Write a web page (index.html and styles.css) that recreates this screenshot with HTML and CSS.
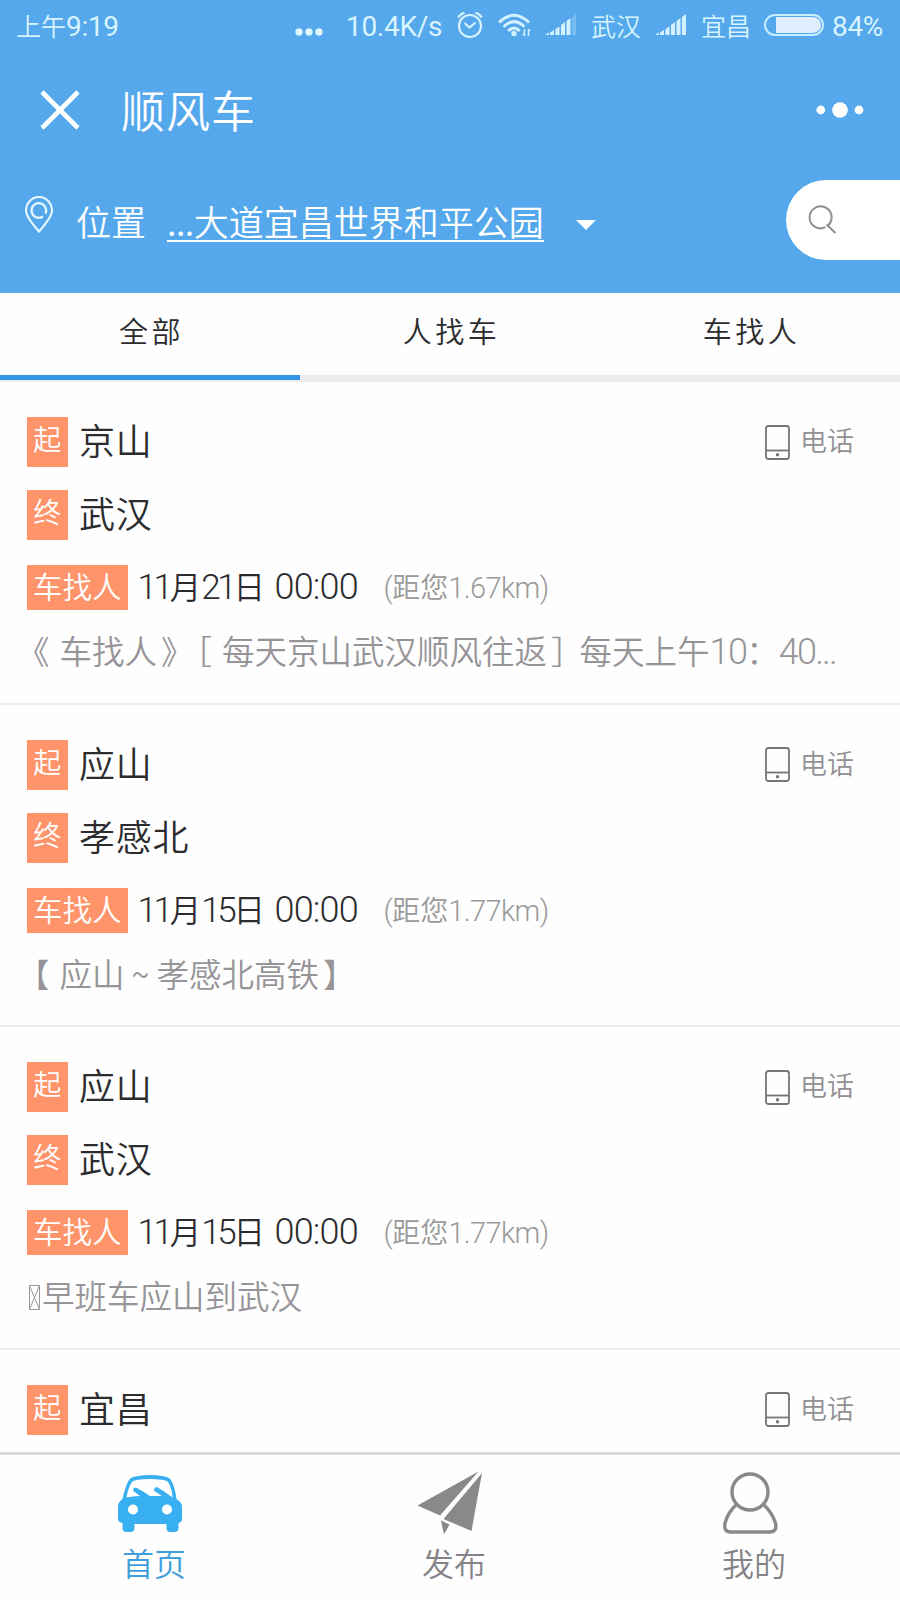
FILE: index.html
```html
<!DOCTYPE html>
<html lang="zh-CN">

<head>
    <meta charset="UTF-8">
    <meta name="viewport" content="width=device-width, initial-scale=1.0">
    <title>顺风车</title>
    <link rel="stylesheet" href="styles.css">
</head>

<body>
    <div class="page">
        <div class="header">
            <div class="status">
                <span class="time">上午<span class="num">9:19</span></span>
                <svg class="s-dots" width="28" height="8" viewBox="0 0 28 8" fill="#dff6ff"><circle cx="4" cy="4" r="3.7"/><circle cx="14" cy="4" r="3.7"/><circle cx="24" cy="4" r="3.7"/></svg>
                <span class="speed"><span class="num">10.4K/s</span></span>
                <svg class="s-alarm" width="26" height="28" viewBox="0 0 26 28" fill="none" stroke="#d3f1ff" stroke-width="2.2"><circle cx="13" cy="15" r="11"/><path d="M7.5 12l5 4.500 6-5M1.200 6.500Q3 3 7.500 1.700M24.800 6.500Q23 3 18.500 1.700"/></svg>
                <svg class="s-wifi" width="33" height="25" viewBox="0 0 33 25" fill="none" stroke="#d3f1ff" stroke-width="3"><path d="M1 9.500Q16 -5 31 9.500M5.500 13.800Q16 3.500 26.500 13.800M10.300 18Q16 12 21.700 18"/><circle cx="16" cy="20.500" r="2.700" fill="#d3f1ff" stroke="none"/><path stroke-width="1.500" d="M26.500 16v7M30.500 16v7M24.500 21.500h2M30.500 17.500h2"/></svg>
                <svg class="s-sig1" width="32" height="22" viewBox="0 0 32 22" fill="#d3f1ff"><path d="M0 21l4-2.500V21zM5 18.500l4-2.500v5H5zM10.500 15l4-2.500V21h-4zM16 11l4-3v13h-4zM21.500 7l4-3v17h-4z"/><path opacity=".3" d="M27 3l4-3v21h-4z"/></svg>
                <span class="city1">武汉</span>
                <svg class="s-sig2" width="32" height="22" viewBox="0 0 32 22" fill="#d3f1ff"><path d="M0 21l4-2.500V21zM5 18.500l4-2.500v5H5zM10.500 15l4-2.500V21h-4zM16 11l4-3v13h-4zM21.500 7l4-3v17h-4zM27 3l4-3v21h-4z"/></svg>
                <span class="city2">宜昌</span>
                <svg class="s-bat" width="60" height="22" viewBox="0 0 60 22"><rect x="1" y="1" width="58" height="20" rx="10" fill="none" stroke="#c5efff" stroke-width="2"/><path d="M12 3h37q8 1.500 8 8t-8 8H12z" fill="#dfefff"/></svg>
                <span class="power"><span class="num">84%</span></span>
            </div>
            <div class="title-bar">
                <svg class="close" width="40" height="40" viewBox="0 0 40 40" stroke="#fff" stroke-width="4.600"><path d="M2 2l36 36M38 2L2 38"/></svg>
                <h1>顺风车</h1>
                <svg class="more" width="48" height="16" viewBox="0 0 48 16" fill="#fff"><circle cx="4.800" cy="8" r="4.400"/><circle cx="24" cy="8" r="7.800"/><circle cx="43" cy="8" r="4.400"/></svg>
            </div>
            <div class="location">
                <svg class="pin" width="28" height="38" viewBox="0 0 28 38" fill="none" stroke="#e4f8ff" stroke-width="2.200"><path d="M14 35.500Q1 21 1 14.500a13 13.500 0 0 1 26 0Q27 21 14 35.500z"/><path d="M18 20.500A7.300 7.300 0 1 1 20.500 17.500"/></svg>
                <span class="label">位置</span>
                <a class="address"><span class="dots">...</span>大道宜昌世界和平公园</a>
                <span class="caret"></span>
                <div class="search">
                    <svg width="30" height="30" viewBox="0 0 30 30" fill="none" stroke="#8f8f8f" stroke-width="2"><path d="M17.500 22.200A11 11 0 1 1 20.500 20M18.500 19.500l9 8.500"/></svg>
                </div>
            </div>
        </div>

        <ul class="tabs">
            <li class="active">全部</li>
            <li>人找车</li>
            <li>车找人</li>
        </ul>

        <div class="list">
            <div class="item">
                <div class="row">
                    <span class="tag">起</span><span class="place">京山</span>
                    <span class="phone"><svg width="25" height="35" viewBox="0 0 25 35" fill="none" stroke="#757575" stroke-width="1.800"><rect x="1" y="1" width="23" height="33" rx="2.500"/><path d="M1 25.500h23"/><circle cx="12.500" cy="29.700" r="1.700" fill="#757575" stroke="none"/></svg><span>电话</span></span>
                </div>
                <div class="row"><span class="tag">终</span><span class="place">武汉</span></div>
                <div class="row info"><span class="tag type">车找人</span><span class="date"><span class="num">11</span>月<span class="num">21</span>日</span><span class="hour"><span class="num">00:00</span></span><span class="far"><span class="num">(</span>距您<span class="num">1.67km)</span></span></div>
                <p class="desc"><span class="open">《</span>车找人<span class="close-mark">》</span><span class="open">［</span>每天京山武汉顺风往返<span class="close-mark">］</span>每天上午<span class="num">10</span>：<span class="num">40...</span></p>
            </div>
            <div class="item">
                <div class="row">
                    <span class="tag">起</span><span class="place">应山</span>
                    <span class="phone"><svg width="25" height="35" viewBox="0 0 25 35" fill="none" stroke="#757575" stroke-width="1.800"><rect x="1" y="1" width="23" height="33" rx="2.500"/><path d="M1 25.500h23"/><circle cx="12.500" cy="29.700" r="1.700" fill="#757575" stroke="none"/></svg><span>电话</span></span>
                </div>
                <div class="row"><span class="tag">终</span><span class="place">孝感北</span></div>
                <div class="row info"><span class="tag type">车找人</span><span class="date"><span class="num">11</span>月<span class="num">15</span>日</span><span class="hour"><span class="num">00:00</span></span><span class="far"><span class="num">(</span>距您<span class="num">1.77km)</span></span></div>
                <p class="desc"><span class="open">【</span>应山<span class="wave">~</span>孝感北高铁<span class="close-mark">】</span></p>
            </div>
            <div class="item">
                <div class="row">
                    <span class="tag">起</span><span class="place">应山</span>
                    <span class="phone"><svg width="25" height="35" viewBox="0 0 25 35" fill="none" stroke="#757575" stroke-width="1.800"><rect x="1" y="1" width="23" height="33" rx="2.500"/><path d="M1 25.500h23"/><circle cx="12.500" cy="29.700" r="1.700" fill="#757575" stroke="none"/></svg><span>电话</span></span>
                </div>
                <div class="row"><span class="tag">终</span><span class="place">武汉</span></div>
                <div class="row info"><span class="tag type">车找人</span><span class="date"><span class="num">11</span>月<span class="num">15</span>日</span><span class="hour"><span class="num">00:00</span></span><span class="far"><span class="num">(</span>距您<span class="num">1.77km)</span></span></div>
                <p class="desc"><svg class="emoji" width="15" height="25" viewBox="0 0 15 25" fill="none" stroke="#999" stroke-width="1"><path d="M2.500 .5h10v24h-10zM2.500 .5l10 24M12.500 .5l-10 24"/></svg>早班车应山到武汉</p>
            </div>
            <div class="item">
                <div class="row">
                    <span class="tag">起</span><span class="place">宜昌</span>
                    <span class="phone"><svg width="25" height="35" viewBox="0 0 25 35" fill="none" stroke="#757575" stroke-width="1.800"><rect x="1" y="1" width="23" height="33" rx="2.500"/><path d="M1 25.500h23"/><circle cx="12.500" cy="29.700" r="1.700" fill="#757575" stroke="none"/></svg><span>电话</span></span>
                </div>
            </div>
        </div>

        <ul class="footer">
            <li class="active">
                <svg width="66" height="66" viewBox="0 0 66 66"><path fill="#38aff0" fill-rule="evenodd" d="M12 9Q14 6 20 5.200Q33 2.800 46 5.200Q52 6 54 9Q58 16 59.500 28Q65 31 65 36V48Q65 51 61.500 52V57Q61.500 61 57.500 61H53.500Q49.500 61 49.500 57V53H17.500V57Q17.500 61 13.500 61H9.500Q5.500 61 5.500 57V52Q1 51 1 48V36Q1 31 5.500 28Q8 16 12 9zM15 11Q11 17 9.500 26.500Q15 25 23 25L16.500 20Q15 17 18.500 16.500Q20 16.500 33 25H45L37.500 20Q36 17 39.500 16Q41 16 55.500 26.500Q55 17 51 11Q50 9.500 45 8.800Q33 7 21 8.800Q16 9.500 15 11z"/><circle cx="16" cy="38.500" r="5" fill="#fff"/><circle cx="50" cy="38.500" r="5" fill="#fff"/></svg>
                <span>首页</span>
            </li>
            <li>
                <svg width="66" height="66" viewBox="0 0 66 66" fill="#8a888b"><path d="M.500 34.500L61.500 .500L23 44.500zM65 2L54.500 60L26.500 48zM24 49.500L32.500 53.500L27 63.500Z"/></svg>
                <span>发布</span>
            </li>
            <li>
                <svg width="66" height="66" viewBox="0 0 66 66" fill="none" stroke="#8a888b" stroke-width="3.400"><circle cx="33" cy="21" r="18"/><path d="M20 33Q11 41 8 52Q6.500 61 13.500 61H52.500Q60.500 61 58.500 52Q55 41 46 33"/></svg>
                <span>我的</span>
            </li>
        </ul>
    </div>
</body>

</html>
```
FILE: styles.css
```css
* {
    margin: 0;
    padding: 0;
    box-sizing: border-box;
}

li {
    list-style: none;
}

svg {
    display: block;
    flex: none;
}

body {
    background-color: #fefefe;
    font-family: "Noto Sans CJK SC", "Liberation Sans", sans-serif;
    font-weight: 350;
    color: #2c2c2e;
    text-spacing-trim: space-all;
}

.page {
    width: 900px;
    height: 1600px;
    overflow: hidden;
    display: flex;
    flex-direction: column;
}

span,
a,
h1 {
    white-space: nowrap;
    flex: none;
}

/* 数字和字母 */
.num {
    font-family: Roboto, "Liberation Sans", sans-serif;
    font-weight: 300;
    line-height: 1;
}

/* 顶部 */
.header {
    height: 293px;
    flex: none;
    background-color: #54a8eb;
    color: #fff;
}

.status {
    height: 50px;
    padding-left: 16px;
    display: flex;
    align-items: center;
    font-size: 25px;
    line-height: 50px;
    color: #d9f4ff;
}

.status .num {
    font-size: 28px;
    font-weight: 400;
    letter-spacing: -0.3px;
}

.time {
    width: 279px;
}

.s-dots {
    margin: 14px 23px 0 0;
}

.speed {
    width: 111px;
}

.s-alarm {
    width: 26px;
    margin-right: 15px;
}

.s-wifi {
    margin-right: 14px;
}

.s-sig1,
.s-sig2 {
    margin-right: 14px;
}

.city1,
.city2 {
    width: 64px;
}

.city2 {
    width: 63px;
}

.s-bat {
    margin-right: 8px;
}

.title-bar {
    height: 120px;
    padding: 0 36px 0 40px;
    display: flex;
    align-items: center;
}

.title-bar h1 {
    margin: -2px 0 0 41px;
    font-size: 44px;
    line-height: 60px;
    letter-spacing: 1px;
    font-weight: 350;
}

.more {
    margin-left: auto;
}

.location {
    height: 100px;
    padding-left: 25px;
    display: flex;
    align-items: center;
    font-size: 35px;
    line-height: 54px;
}

.pin {
    margin: -10px 23px 0 0;
}

.label {
    width: 91px;
    margin-top: 2px;
}

.address {
    border-bottom: 2px solid #fff;
    height: 42px;
    line-height: 42px;
    margin-top: 2px;
}

.dots {
    letter-spacing: -0.5px;
}

.caret {
    margin: 9px 0 0 32px;
    border: 10px solid transparent;
    border-top-color: #fff;
    border-bottom: 0;
}

.search {
    width: 114px;
    height: 80px;
    margin-left: auto;
    padding: 25px 0 0 22px;
    border-radius: 40px 0 0 40px;
    background-color: #fff;
}

/* 选项卡 */
.tabs {
    height: 89px;
    flex: none;
    display: flex;
    border-bottom: 7px solid #ebeaec;
}

.tabs li {
    flex: 1;
    height: 87px;
    font-size: 29px;
    line-height: 75px;
    letter-spacing: 3.5px;
    text-indent: 3px;
    text-align: center;
}

.tabs .active {
    border-bottom: 5px solid #3196e5;
}

/* 列表 */
.list {
    flex: 1;
    min-height: 0;
    overflow: hidden;
}

.item {
    height: 322.5px;
    padding: 35px 46px 0 27px;
    border-bottom: 2px solid #ecebee;
}

.row {
    display: flex;
    height: 50px;
    margin-bottom: 23px;
    line-height: 45px;
}

.tag {
    width: 40.5px;
    height: 50px;
    background-color: #ff936a;
    color: #fff;
    font-size: 28px;
    line-height: 43px;
    text-align: center;
}

.place {
    margin-left: 11.5px;
    font-size: 36px;
    letter-spacing: 0.8px;
}

.phone {
    margin-left: auto;
    display: flex;
    align-items: center;
    gap: 10px;
    height: 50px;
    font-size: 27px;
    color: #929094;
}

.phone span {
    margin-top: -5px;
}

.info {
    height: 45px;
    margin: 25px 0 0;
    line-height: 40px;
}

.type {
    width: 100.5px;
    height: 45px;
    line-height: 40px;
    font-size: 29.500px;
}

.date {
    margin-left: 10px;
    width: 137px;
    font-size: 31.500px;
}

.date .num {
    font-size: 35px;
    letter-spacing: -3.3px;
}

.hour {
    width: 109px;
    font-size: 33px;
}

.hour .num {
    font-size: 36px;
    letter-spacing: -0.8px;
}

.far {
    font-size: 28px;
    line-height: 42px;
    color: #999;
}

.far .num {
    font-size: 29px;
    letter-spacing: -0.6px;
}

.desc {
    margin-top: 16px;
    height: 48px;
    font-size: 32.500px;
    line-height: 47px;
    white-space: nowrap;
    color: #969498;
}

.desc .num {
    font-size: 36px;
    letter-spacing: -1.7px;
}

/* 书名号和括号用半宽字形，再补左右间距 */
.open,
.close-mark {
    font-feature-settings: "halt";
}

.open {
    margin: 0 10px 0 6.25px;
}

.close-mark {
    margin: 0 12.25px 0 4px;
}

.wave {
    display: inline-block;
    width: 32px;
    text-align: center;
}

.emoji {
    display: inline-block;
    vertical-align: -1px;
}

/* 底部导航 */
.footer {
    height: 148px;
    flex: none;
    display: flex;
    border-top: 3px solid #dcdadf;
}

.footer li {
    flex: 1;
    padding-top: 16px;
    display: flex;
    flex-direction: column;
    align-items: center;
    font-size: 32px;
    color: #858387;
}

.footer span {
    margin: 1px 0 0 8px;
    line-height: 48px;
}

.footer .active {
    color: #3f9fdc;
}
```
